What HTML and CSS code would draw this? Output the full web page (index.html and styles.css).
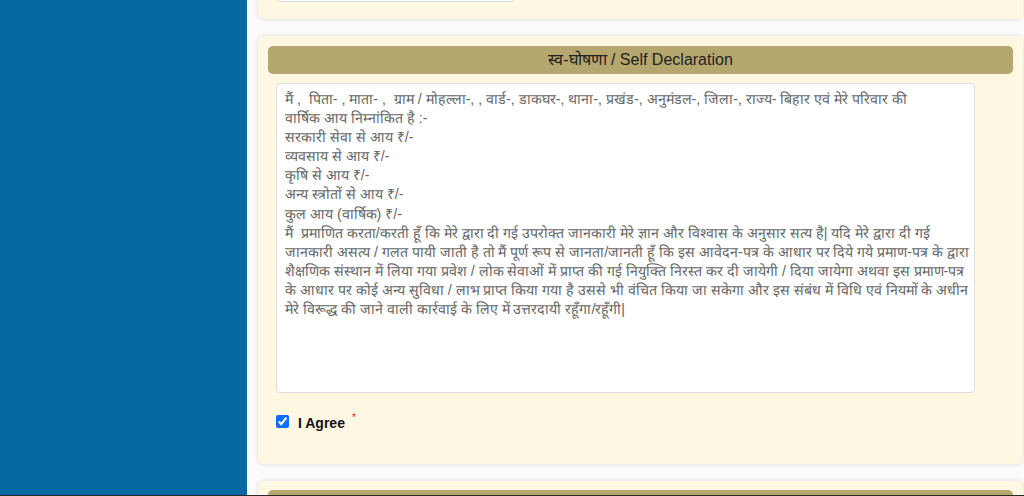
FILE: index.html
```html
<!DOCTYPE html>
<html lang="hi">
<head>
<meta charset="utf-8">
<title>Self Declaration</title>
<link rel="stylesheet" href="styles.css">
</head>
<body>
<div class="page">
  <aside class="sidebar"></aside>
  <main class="main">
    <section class="card card-top">
      <div class="input-stub"></div>
    </section>
    <section class="card">
      <h2 class="card-head">स्व-घोषणा / Self Declaration</h2>
      <div class="declaration"><span class="ln">मैं ,  पिता- , माता- ,  ग्राम / मोहल्ला-, , वार्ड-, डाकघर-, थाना-, प्रखंड-, अनुमंडल-, जिला-, राज्य- बिहार एवं मेरे परिवार की</span>
<span class="ln">वार्षिक आय निम्नांकित है :-</span>
<span class="ln">सरकारी सेवा से आय ₹/-</span>
<span class="ln">व्यवसाय से आय ₹/-</span>
<span class="ln">कृषि से आय ₹/-</span>
<span class="ln">अन्य स्त्रोतों से आय ₹/-</span>
<span class="ln">कुल आय (वार्षिक) ₹/-</span>
<span class="ln">मैं  प्रमाणित करता/करती हूँ कि मेरे द्वारा दी गई उपरोक्त जानकारी मेरे ज्ञान और विश्वास के अनुसार सत्य है| यदि मेरे द्वारा दी गई</span>
<span class="ln">जानकारी असत्य / गलत पायी जाती है तो मैं पूर्ण रूप से जानता/जानती हूँ कि इस आवेदन-पत्र के आधार पर दिये गये प्रमाण-पत्र के द्वारा</span>
<span class="ln">शैक्षणिक संस्थान में लिया गया प्रवेश / लोक सेवाओं में प्राप्त की गई नियुक्ति निरस्त कर दी जायेगी / दिया जायेगा अथवा इस प्रमाण-पत्र</span>
<span class="ln">के आधार पर कोई अन्य सुविधा / लाभ प्राप्त किया गया है उससे भी वंचित किया जा सकेगा और इस संबंध में विधि एवं नियमों के अधीन</span>
<span class="ln">मेरे विरूद्ध की जाने वाली कार्रवाई के लिए में उत्तरदायी रहूँगा/रहूँगी|</span></div>
      <label class="agree">
        <input type="checkbox" checked>
        <span class="agree-text">I Agree</span>
        <span class="req">*</span>
      </label>
    </section>
    <section class="card card-next">
      <div class="card-head"></div>
    </section>
  </main>
</div>
<div class="bottom-line"></div>
</body>
</html>
```

FILE: styles.css
```css
html, body {
  margin: 0;
  padding: 0;
  height: 496px;
  overflow: hidden;
  font-family: "Liberation Sans", Arial, sans-serif;
  background: #ffffff;
}

.page {
  display: flex;
  height: 495px;
  overflow: hidden;
}

.sidebar {
  width: 247px;
  flex: 0 0 247px;
  background: #0768a3;
}

.main {
  flex: 1;
  padding: 0 1px 0 11px;
  background: #fbfbfb;
  overflow: hidden;
}

.card {
  background: #fef8e2;
  border-radius: 6px;
  box-shadow: 0 0 5px rgba(0, 0, 0, 0.13);
  padding: 10px 10px 0 10px;
  margin-bottom: 17px;
}

.card-top {
  border-radius: 0 0 6px 6px;
  padding: 0 10px 17px 20px;
}

.input-stub {
  width: 233px;
  height: 1px;
  border: 1px solid #dcdcdc;
  border-top: none;
  border-radius: 0 0 4px 4px;
  background: #ffffff;
}

.card-head {
  margin: 0;
  height: 28px;
  line-height: 28px;
  background: #b5a76e;
  border-radius: 5px;
  text-align: center;
  font-size: 16px;
  font-weight: normal;
  color: #222222;
}

.declaration {
  margin: 9px 38px 0 8px;
  height: 296px;
  padding: 6px 8px 6px 8px;
  background: #ffffff;
  border: 1px solid #dddddd;
  border-radius: 4px;
  font-size: 14.2px;
  line-height: 19.1px;
  color: #666666;
  white-space: pre;
  overflow: hidden;
}

.ln {
  white-space: pre;
}

.agree {
  display: flex;
  align-items: flex-start;
  padding: 21px 0 34px 8px;
  height: 16px;
}

.agree input {
  width: 13px;
  height: 13px;
  margin: 1px 9px 0 0;
  accent-color: #0d6efd;
}

.agree-text {
  font-size: 14px;
  font-weight: bold;
  color: #111111;
  line-height: 16px;
  margin-top: 1px;
}

.req {
  color: #e32222;
  font-size: 10px;
  margin: -4px 0 0 7px;
  line-height: 16px;
}

.card-next {
  padding-top: 9px;
  height: 40px;
}

.bottom-line {
  height: 1px;
  background: #2a2a2a;
}
```
